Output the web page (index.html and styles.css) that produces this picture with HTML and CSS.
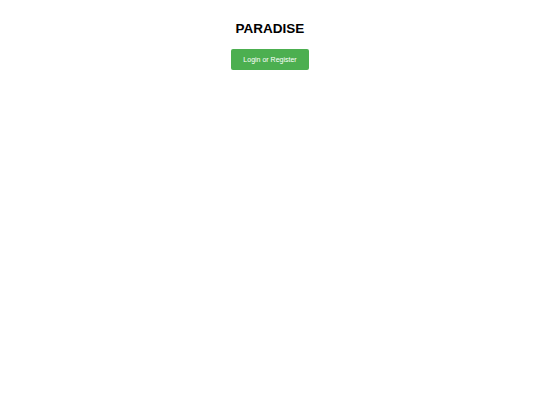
FILE: index.html
```html
<!DOCTYPE html>
<html>
<head>
<meta charset="utf-8">
<link rel="stylesheet" href="styles.css">
</head>
<body>
<div class="page">
  <h1 class="title">PARADISE</h1>
  <button class="btn">Login or Register</button>
</div>
</body>
</html>
```
FILE: styles.css
```css
html, body {
  margin: 0;
  padding: 0;
  background: #fff;
}
.page {
  display: flex;
  flex-direction: column;
  align-items: center;
  padding-top: 21px;
  font-family: "Liberation Sans", Arial, sans-serif;
}
.title {
  margin: 0;
  font-size: 13.5px;
  font-weight: bold;
  line-height: 15px;
  color: #000;
}
.btn {
  margin-top: 13px;
  width: 78px;
  height: 21px;
  padding: 0;
  border: none;
  border-radius: 2px;
  background: #4caf50;
  color: #fff;
  font-family: "Liberation Sans", Arial, sans-serif;
  font-size: 7px;
}
```
